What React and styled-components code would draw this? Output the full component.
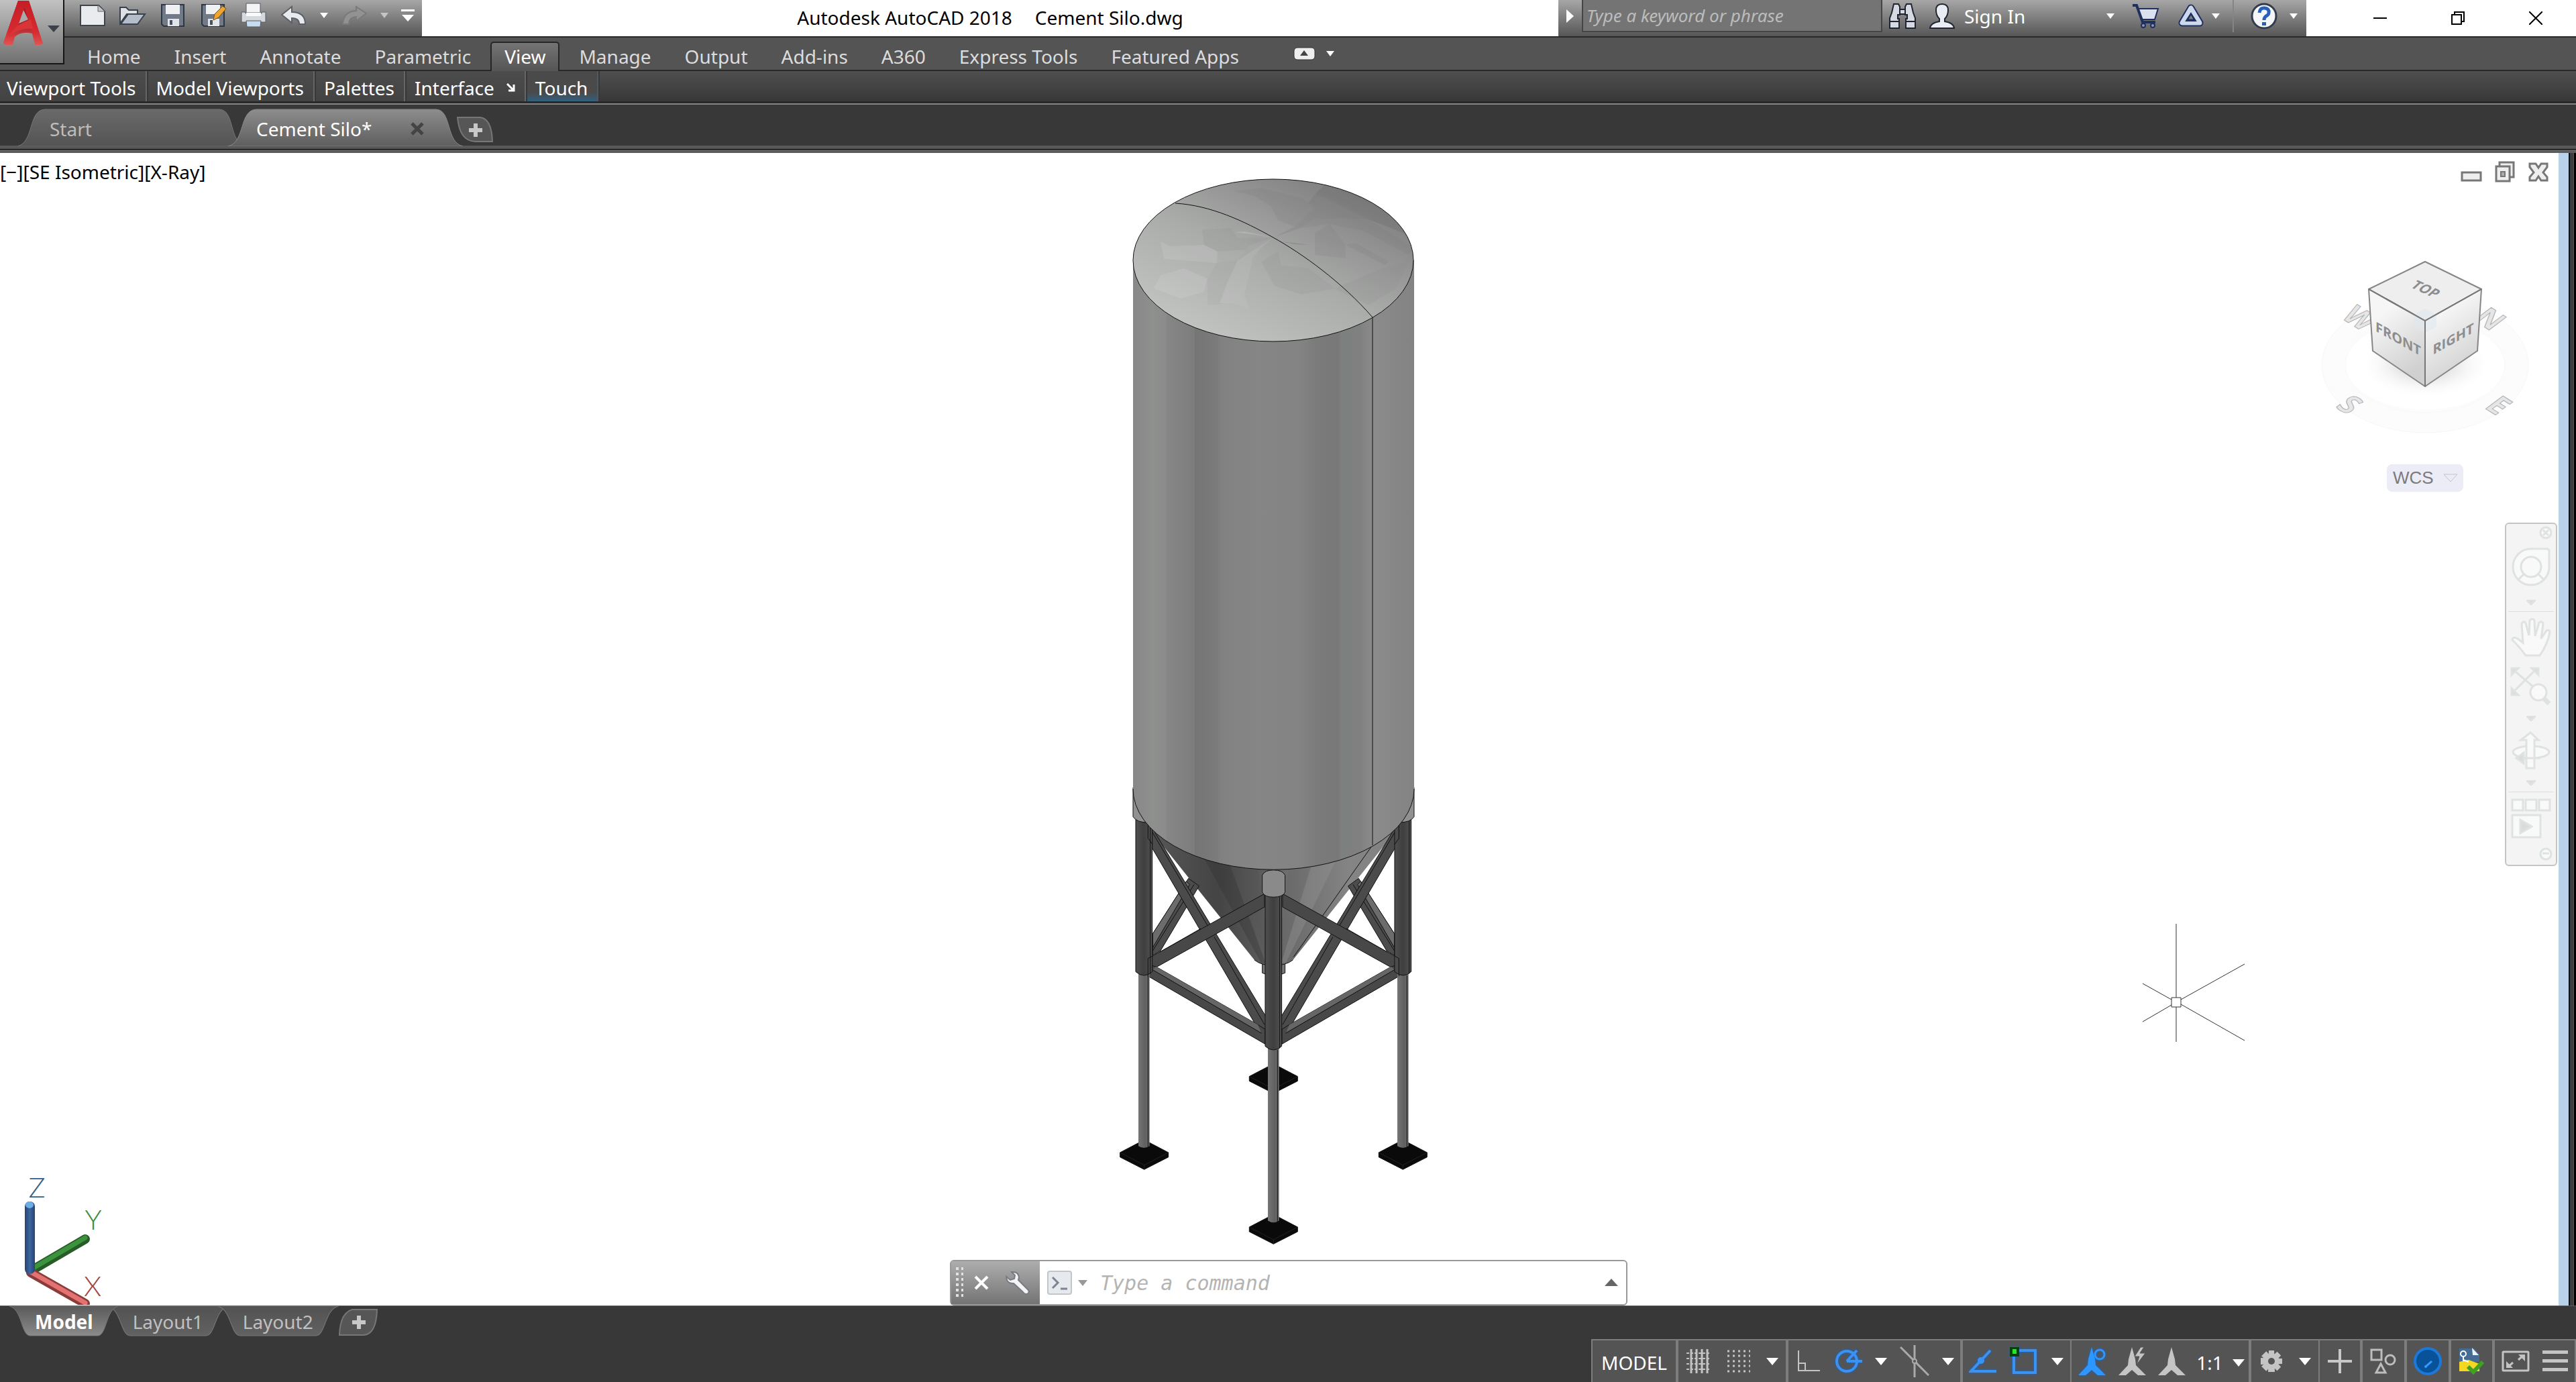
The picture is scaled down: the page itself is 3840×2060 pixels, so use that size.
import React, { useState } from "react";
import styled, { createGlobalStyle, css } from "styled-components";

const ribbonTabs = ["Home", "Insert", "Annotate", "Parametric", "View", "Manage", "Output", "Add-ins", "A360", "Express Tools", "Featured Apps"];

const App = () => {
  const [ribbon, setRibbon] = useState("View");
  const [layout, setLayout] = useState("Model");

  return (
    <>
      <GlobalStyle />
      <Window>
        <Header>
          <AppButton aria-label="Application menu">
            <svg width="94" height="94" viewBox="0 0 94 94">
              <defs>
                <linearGradient id="logoFoot" x1="0" y1="0" x2="0" y2="1">
                  <stop offset="0.5" stopColor="#a81a20" />
                  <stop offset="1" stopColor="#dd5a58" />
                </linearGradient>
                <linearGradient id="logoRed" x1="0" y1="0" x2="0" y2="1">
                  <stop offset="0" stopColor="#c41f25" />
                  <stop offset="0.7" stopColor="#d62a30" />
                  <stop offset="1" stopColor="#de5553" />
                </linearGradient>
              </defs>
              <path d="M27 1h16l21 64-4 2H52l-4-17Q32 46 22 55l-3 12H8l-3-3z" fill="url(#logoFoot)" />
              <path d="M27 1h8l1 11-8 24-8 20-3 11H8l-3-3z" fill="url(#logoRed)" />
              <path d="M33 1h10l21 64-4 2h-6L42 28z" fill="url(#logoRed)" />
              <path d="M46 29L49 43Q28 41 13 55 22 36 46 29z" fill="#d93539" />
              <path d="M35 15l7 14-14 6z" fill="#aaa" />
              <path d="M71 38h18l-9 10z" fill="#3b4149" />
            </svg>
          </AppButton>

          <TitleBar>
            <QuickAccess>
              <ToolButton $w={60} aria-label="New"><NewIcon /></ToolButton>
              <ToolButton $w={60} aria-label="Open"><OpenIcon /></ToolButton>
              <ToolButton $w={60} aria-label="Save"><SaveIcon /></ToolButton>
              <ToolButton $w={60} aria-label="Save As"><SaveIcon pencil /></ToolButton>
              <ToolButton $w={60} aria-label="Plot"><PrintIcon /></ToolButton>
              <ToolButton $w={60} aria-label="Undo"><UndoIcon /></ToolButton>
              <ToolButton $w={30} aria-label="Undo list"><Down /></ToolButton>
              <ToolButton $w={60} aria-label="Redo"><UndoIcon redo /></ToolButton>
              <ToolButton $w={30} aria-label="Redo list"><Down fill="#c4c4c4" /></ToolButton>
              <ToolButton $w={40} aria-label="Customize toolbar">
                <svg width="20" height="18"><path d="M0 0h20v3H0zM1 8h18l-9 10z" fill="#fff" /></svg>
              </ToolButton>
            </QuickAccess>
            <Title><span>Autodesk AutoCAD 2018</span><span>Cement Silo.dwg</span></Title>
            <InfoCenter>
              <ToolButton $w={35} aria-label="Expand search">
                <svg width="11" height="20"><path d="M0 0v20l11-10z" fill="#fff" /></svg>
              </ToolButton>
              <Search type="text" aria-label="Search" placeholder="Type a keyword or phrase" />
              <ToolButton $w={60} aria-label="Find"><BinocularsIcon /></ToolButton>
              <SignIn><PersonIcon /><span>Sign In</span><Down /></SignIn>
              <ToolButton $w={74} aria-label="App store"><CartIcon /></ToolButton>
              <ToolButton $w={80} $gap={9} aria-label="Stay connected"><ConnectIcon /><Down /></ToolButton>
              <Divider />
              <HelpButton aria-label="Help"><HelpIcon /><Down /></HelpButton>
            </InfoCenter>
            <WindowButtons>
              <button aria-label="Minimize"><svg width="20" height="20"><path d="M0 9h20v2H0z" /></svg></button>
              <button aria-label="Restore">
                <svg width="20" height="20" fill="none" stroke="#000" strokeWidth="2"><path d="M1 5h14v14H1zM5 5V1h14v14h-4" /></svg>
              </button>
              <button aria-label="Close">
                <svg width="20" height="20" stroke="#000" strokeWidth="2"><path d="M0 0l20 20M20 0L0 20" /></svg>
              </button>
            </WindowButtons>
          </TitleBar>

          <RibbonTabs>
            {ribbonTabs.map((tab) => (
              <RibbonTab key={tab} $on={tab === ribbon} onClick={() => setRibbon(tab)}>{tab}</RibbonTab>
            ))}
            <RibbonToggle aria-label="Minimize ribbon">
              <svg width="33" height="20"><rect x="1" y="1" width="31" height="18" rx="5" fill="#eee" stroke="#333" /><path d="M10 13h12l-6-8z" fill="#444" /></svg>
              <Down />
            </RibbonToggle>
          </RibbonTabs>
        </Header>

        <RibbonPanels>
          <Panel>Viewport Tools</Panel>
          <Panel>Model Viewports</Panel>
          <Panel>Palettes</Panel>
          <Panel>
            Interface
            <svg width="13" height="13" fill="none" stroke="#fff" strokeWidth="3"><path d="M1 1l10 10M11 2v9H3" /></svg>
          </Panel>
          <Panel $touch>Touch</Panel>
        </RibbonPanels>

        <FileTabs>
          <FileTab $w={340}>
            <FileTabShape />
            <span>Start</span>
          </FileTab>
          <FileTab $w={350} $on>
            <FileTabShape on />
            <span>Cement Silo*</span>
            <svg width="20" height="20" stroke="#444" strokeWidth="5"><path d="M2 2l16 16M18 2L2 18" /></svg>
          </FileTab>
          <AddTab aria-label="New drawing">
            <svg width="54" height="38" viewBox="0 0 54 38">
              <path d="M1 1h34q17 2 18 36H27Q4 36 1 1z" fill="#565656" stroke="#777" strokeWidth="2" />
              <path d="M25 10h6v7h7v6h-7v7h-6v-7h-7v-6h7z" fill="#c8c8c8" />
            </svg>
          </AddTab>
        </FileTabs>

        <Workspace>
          <Canvas>
            <ViewLabel><button>[−]</button><button>[SE Isometric]</button><button>[X-Ray]</button></ViewLabel>
            <Silo />
            <Crosshair />
            <ViewportButtons>
              <button aria-label="Minimize viewport">
                <svg width="32" height="34"><rect x="2" y="18" width="28" height="12" fill="#eee" stroke="#777" strokeWidth="3" /></svg>
              </button>
              <button aria-label="Restore viewport">
                <svg width="32" height="34" fill="#eee" stroke="#777" strokeWidth="3"><path d="M8 8V3h21v22h-5" /><path d="M3 9h20v22H3z" /><path d="M10 17h6v7h-6z" fill="#aaa" strokeWidth="2" /></svg>
              </button>
              <button aria-label="Close viewport">
                <svg width="32" height="34" viewBox="0 0 32 34"><path d="M3 5h9l4 6 4-6h9v5l-6 8 6 7v5h-9l-4-6-4 6H3v-5l6-7-6-8z" fill="#eee" stroke="#777" strokeWidth="3" /></svg>
              </button>
            </ViewportButtons>
            <ViewCube />
            <Wcs>WCS<svg width="22" height="13" fill="none" stroke="#c0c4cf"><path d="M1 1h20L11 12z" /></svg></Wcs>
            <NavBar />
            <UcsIcon />
            <CommandLine>
              <CommandTools>
                <svg width="12" height="46" fill="#e2e2e2">
                  {[0, 8, 16, 24, 32, 40].map((y) => <path key={y} d={`M0 ${y}h4v4H0zM8 ${y}h3v4H8z`} />)}
                </svg>
                <button aria-label="Close command line">
                  <svg width="22" height="22" stroke="#fff" strokeWidth="4"><path d="M2 2l18 18M20 2L2 20" /></svg>
                </button>
                <button aria-label="Customize">
                  <svg width="36" height="36" viewBox="0 0 36 36">
                    <path d="M9 2q10-1 11 8l-1 4 15 15q2 5-3 6-3 0-5-3L12 19Q2 20 1 9l6 5 6-2 1-5z" fill="#f4f4f6" stroke="#777b82" strokeWidth="2" />
                  </svg>
                </button>
              </CommandTools>
              <button aria-label="Recent commands">
                <svg width="60" height="36">
                  <rect x="1" y="1" width="35" height="34" rx="3" fill="#e6e9ee" stroke="#c2c6cb" strokeWidth="2" />
                  <path d="M8 10l8 8-8 8M20 27h10" fill="none" stroke="#7d848f" strokeWidth="3" />
                  <path d="M46 14h14l-7 9z" fill="#999" />
                </svg>
              </button>
              <CommandInput type="text" aria-label="Command" placeholder="Type a command" />
              <button aria-label="Command history"><svg width="20" height="12"><path d="M0 11h20L10 0z" fill="#666" /></svg></button>
            </CommandLine>
          </Canvas>
          <Edge />
        </Workspace>

        <LayoutTabs>
          {["Model", "Layout1", "Layout2"].map((name) => (
            <LayoutTab key={name} $on={name === layout} onClick={() => setLayout(name)}>
              <LayoutTabShape on={name === layout} />
              <span>{name}</span>
            </LayoutTab>
          ))}
          <AddTab $layout aria-label="New layout">
            <svg width="58" height="40" viewBox="0 0 58 40">
              <path d="M20 1h37q-1 37-20 38H1Q2 6 20 1z" fill="#565656" stroke="#777" strokeWidth="2" />
              <path d="M27 10h6v7h7v6h-7v7h-6v-7h-7v-6h7z" fill="#c8c8c8" />
            </svg>
          </AddTab>
        </LayoutTabs>

        <StatusBar>
          <Group><TextButton $w={124}>MODEL</TextButton></Group>
          <Group>
            <ToolButton $w={60} aria-label="Grid">
              <svg width="36" height="36" stroke="#c4c4c4" strokeWidth="3"><path d="M7 0v36M15 0v36M23 0v36M31 0v36" /><path d="M0 6h36M0 14h36M0 22h36M0 30h36" strokeDasharray="4 2" strokeWidth="2" /></svg>
            </ToolButton>
            <ToolButton $w={60} aria-label="Snap">
              <svg width="34" height="34" stroke="#c4c4c4" strokeWidth="3" strokeDasharray="3 5"><path d="M0 2h35M0 9h35M0 17h35M0 24h35M0 32h35" /></svg>
            </ToolButton>
            <ToolButton $w={40} aria-label="Snap settings"><BigDown /></ToolButton>
          </Group>
          <Group>
            <ToolButton $w={60} aria-label="Ortho">
              <svg width="34" height="32" fill="none" stroke="#c4c4c4" strokeWidth="2"><path d="M2 0v30h32M2 19h10v11" /></svg>
            </ToolButton>
            <ToolButton $w={60} aria-label="Polar tracking">
              <BlueSvg width="42" height="40"><circle cx="18" cy="20" r="15" /><path d="M18 20h23M18 20L33 4" /></BlueSvg>
            </ToolButton>
            <ToolButton $w={36} aria-label="Polar settings"><BigDown /></ToolButton>
            <ToolButton $w={64} aria-label="Isometric drafting">
              <svg width="44" height="48" stroke="#aaa" strokeWidth="3"><path d="M22 0v48M1 3l42 42" /><circle cx="22" cy="24" r="3" fill="#555" strokeWidth="2" /></svg>
            </ToolButton>
            <ToolButton $w={36} aria-label="Isoplane"><BigDown /></ToolButton>
          </Group>
          <Group $flat>
            <ToolButton $w={60} aria-label="Object snap tracking">
              <BlueSvg width="42" height="38"><path d="M32 3L3 34h38" /><circle cx="18" cy="18" r="3" fill="#3a92f2" /></BlueSvg>
            </ToolButton>
            <ToolButton $w={62} aria-label="Object snap">
              <BlueSvg width="42" height="42"><path d="M6 5h32v33H6z" /><path d="M2 1h10v11H2z" fill="#25e825" stroke="#06420a" /></BlueSvg>
            </ToolButton>
            <ToolButton $w={38} aria-label="Snap options"><BigDown /></ToolButton>
          </Group>
          <Group>
            <ToolButton $w={62} aria-label="Annotation visibility"><ScaleIcon kind="on" /></ToolButton>
            <ToolButton $w={58} aria-label="Auto scale"><ScaleIcon kind="auto" /></ToolButton>
            <ToolButton $w={60} aria-label="Annotation scale"><ScaleIcon /></ToolButton>
            <TextButton $w={84}>1:1<BigDown /></TextButton>
          </Group>
          <Group $flat>
            <ToolButton $w={60} aria-label="Workspace"><GearIcon /></ToolButton>
            <ToolButton $w={40} aria-label="Workspace list"><BigDown /></ToolButton>
          </Group>
          <Group>
            <ToolButton $w={60} aria-label="Annotation monitor"><svg width="36" height="36" stroke="#c8c8c8" strokeWidth="4"><path d="M18 0v36M0 18h36" /></svg></ToolButton>
          </Group>
          <Group>
            <ToolButton $w={62} aria-label="Isolate objects">
              <svg width="40" height="38" fill="none" stroke="#bdbdbd" strokeWidth="3"><path d="M2 2h15v15H2zM16 23l7 13H9z" /><circle cx="30" cy="17" r="7" /></svg>
            </ToolButton>
          </Group>
          <Group>
            <ToolButton $w={62} aria-label="Graphics performance">
              <svg width="46" height="46"><circle cx="23" cy="23" r="19" fill="#075299" stroke="#1c79dc" strokeWidth="4" /><path d="M20 31l9-8" stroke="#359cff" strokeWidth="3" /><circle cx="20" cy="31" r="2" fill="#359cff" /></svg>
            </ToolButton>
          </Group>
          <Group>
            <ToolButton $w={61} aria-label="Trusted file">
              <svg width="40" height="42">
                <path d="M1 2h22l8 9v11H1z" fill="#456d94" /><path d="M20 1l10 11h-9z" fill="#eef2f5" />
                <path d="M1 22l14-3 16 6v11H1z" fill="#f4d723" />
                <path d="M7 21V10M7 19l8 3" stroke="#fff" strokeWidth="2" /><circle cx="7" cy="10" r="4" fill="#456d94" stroke="#fff" strokeWidth="2" />
                <path d="M14 29l8 8 14-15" fill="none" stroke="#3fa122" strokeWidth="6" />
              </svg>
            </ToolButton>
          </Group>
          <Group>
            <ToolButton $w={61} aria-label="Clean screen">
              <svg width="42" height="32" fill="none" stroke="#c4c4c4" strokeWidth="3"><rect x="2" y="2" width="38" height="28" rx="1" /><path d="M25 14l8-7M17 18l-8 7" /><path d="M25 6h10v10zM7 16v10h10z" fill="#c4c4c4" stroke="none" /></svg>
            </ToolButton>
            <ToolButton $w={58} aria-label="Customization">
              <svg width="38" height="32" fill="#c4c4c4"><path d="M0 0h38v5H0zM0 13h38v5H0zM0 26h38v5H0z" /></svg>
            </ToolButton>
          </Group>
        </StatusBar>
      </Window>
    </>
  );
};

const Down = ({ fill = "#fff" }) => <svg width="12" height="8"><path d="M0 0h12L6 8z" fill={fill} /></svg>;
const BigDown = () => <svg width="18" height="11"><path d="M0 0h18L9 11z" fill="#fff" /></svg>;

const NewIcon = () => (
  <svg width="40" height="34"><path d="M2 2h27l9 9v21H2z" fill="#e9ebee" stroke="#3f444b" strokeWidth="2" /><path d="M28 2v9h10" fill="#c3c6ca" stroke="#666" /></svg>
);

const OpenIcon = () => (
  <svg width="42" height="30" stroke="#3a414b" strokeWidth="2">
    <path d="M2 27V3h9l4 4h13v6H12z" fill="#dde1e6" />
    <path d="M3 28L14 13h25L28 28z" fill="#b4bdc9" />
  </svg>
);

const SaveIcon = ({ pencil }) => (
  <svg width="40" height="36">
    <path d="M3 2h33v32H6l-3-3z" fill="#717a88" stroke="#30363f" strokeWidth="2" />
    <path d="M9 2h21v14H9z" fill="#eef0f2" />
    <path d="M12 23h17v11H12z" fill="#e2e5e9" />
    <path d="M15 25h4v7h-4z" fill="#4a525d" />
    {pencil && <path d="M20 25l2-9L34 4l5 4-11 13z" fill="#eea52e" stroke="#774c1b" />}
  </svg>
);

const PrintIcon = () => (
  <svg width="40" height="38" stroke="#555b63">
    <path d="M9 1h21v14H9z" fill="#f3f4f6" />
    <path d="M2 14h6v2h24v-2h6v15H2z" fill="#d5d8dd" />
    <path d="M9 20h22v-5H9z" fill="#fafafa" stroke="none" />
    <path d="M9 27h22l-1 9H10z" fill="#c7dcf0" />
  </svg>
);

const UndoIcon = ({ redo }) => (
  <svg width="38" height="30">
    <path
      d={redo ? "M37 12L22 2v6Q3 9 2 28h9q0-10 11-11v6z" : "M1 14L16 2v8q20 0 20 18h-9q0-9-11-9v7z"}
      fill={redo ? "#929292" : "#e8eaed"}
      stroke={redo ? "#7a7a7a" : "#5a6068"}
      strokeWidth="2"
    />
  </svg>
);

const BinocularsIcon = () => (
  <svg width="42" height="40" fill="#d5d9e2" stroke="#1f2430" strokeWidth="2">
    <path d="M8 2h7l2 4v12h-3v6h2v14H2V23l3-8zM34 2h-7l-2 4v12h3v6h-2v14h14V23l-3-8z" />
    <path d="M17 10h8v7h-8z" /><path d="M2 28h14M26 28h14" />
  </svg>
);

const PersonIcon = () => (
  <svg width="42" height="40" fill="#e9edf3" stroke="#1f2430" strokeWidth="2">
    <path d="M21 2q9 0 9 9 0 8-5 13v4q13 2 14 10H3q1-8 14-10v-4q-5-5-5-13 0-9 9-9z" />
  </svg>
);

const CartIcon = () => (
  <svg width="42" height="38" stroke="#20305e" strokeWidth="2">
    <path d="M9 8h30l-5 16H14z" fill="#dbe1ee" />
    <path d="M1 3h6l9 25h19" fill="none" strokeWidth="4" />
    <circle cx="17" cy="33" r="3" fill="#8997b8" /><circle cx="31" cy="33" r="3" fill="#8997b8" />
  </svg>
);

const ConnectIcon = () => (
  <svg width="44" height="38" fill="none">
    <path d="M22 7L9 29h26z" stroke="#20305e" strokeWidth="11" strokeLinejoin="round" />
    <path d="M22 7L9 29h26z" stroke="#cdd8ec" strokeWidth="7" strokeLinejoin="round" />
    <path d="M22 15l-7 11h14z" stroke="#20305e" strokeWidth="2" />
  </svg>
);

const HelpIcon = () => (
  <svg width="40" height="40">
    <circle cx="20" cy="20" r="18" fill="#f4f6fa" stroke="#333c4c" strokeWidth="3" />
    <path d="M13 15q1-8 8-7 7 1 6 7 0 3-4 5-3 2-3 6" fill="none" stroke="#2860b8" strokeWidth="5" />
    <path d="M17 29h6v5h-6z" fill="#2860b8" />
  </svg>
);

const ScaleIcon = ({ kind }) => (
  <ScaleSvg width="44" height="46" $on={kind === "on"}>
    <path d="M21 2l5 18 1 9 15 15H30l-9-8-9 8H1l14-15 1-9z" />
    {kind === "on" && <circle cx="33" cy="13" r="7" fill="none" strokeWidth="3" stroke="#2e97ff" />}
    {kind === "auto" && <path d="M34 2l-9 14h7l-4 12 13-17h-8l6-9z" stroke="#555" />}
  </ScaleSvg>
);

const GearIcon = () => (
  <svg width="32" height="32" fill="#c4c4c4">
    {[0, 45, 90, 135].map((a) => <path key={a} d="M12 0h8l1 32H11z" transform={`rotate(${a} 16 16)`} />)}
    <circle cx="16" cy="16" r="8" fill="none" stroke="#c4c4c4" strokeWidth="7" />
    <circle cx="16" cy="16" r="5" fill="#555" />
  </svg>
);

const FileTabShape = ({ on }) => (
  <svg viewBox="0 0 350 56" preserveAspectRatio="none">
    <defs>
      <linearGradient id={on ? "tabOn" : "tabOff"} x2="0" y2="1">
        <stop offset="0" stopColor={on ? "#8d8d8d" : "#6a6a6a"} />
        <stop offset="1" stopColor={on ? "#5e5e5e" : "#545454"} />
      </linearGradient>
    </defs>
    <path d="M0 56C26 50 16 2 42 1H310C334 2 324 50 350 56z" fill={on ? "url(#tabOn)" : "url(#tabOff)"} stroke={on ? "#888" : "#757575"} />
  </svg>
);

const LayoutTabShape = ({ on }) => (
  <svg viewBox="0 0 170 45" preserveAspectRatio="none">
    <defs>
      <linearGradient id={on ? "layOn" : "layOff"} x2="0" y2="1">
        <stop offset="0" stopColor={on ? "#5a5a5a" : "#525252"} />
        <stop offset="1" stopColor={on ? "#8b8b8b" : "#626262"} />
      </linearGradient>
    </defs>
    <path d="M0 0C20 4 18 43 32 44H138C152 43 150 4 170 0z" fill={on ? "url(#layOn)" : "url(#layOff)"} stroke="#777" />
  </svg>
);

// half of the support frame, the other half is mirrored
const Braces = () => (
  <>
    <path d="M235 505L395 325 442 350 270 560 235 575z" fill="#4c4c4c" />
    <path d="M235 505L385 335 400 345 235 550z" fill="#6c6c6c" />
    <path d="M235 560L420 345" />
    <path d="M215 150L240 170 740 772V830L715 825 215 205z" fill="#4b4b4b" />
    <path d="M225 165L480 478M510 515L735 800" fill="none" />
    <path d="M215 585L735 375V418L215 628z" fill="#484848" />
    <path d="M265 565L450 488" />
    <path d="M215 605L250 612 705 800 738 815V863L215 643z" fill="#484848" />
    <path d="M250 612L705 800 720 826 235 622z" fill="#666" stroke="none" />
    <path d="M235 622L722 828" />
  </>
);

const Plate = ({ x, y }) => (
  <g transform={`translate(${x} ${y})`}>
    <path d="M-108 -6L0 -47 108 -6V9L0 49-108 9z" fill="#0a0a0a" />
    <path d="M-108 -6L0 35 108 -6M0 35V49" fill="none" stroke="#222" />
  </g>
);

const Leg = ({ x, top, split, bottom }) => (
  <>
    <path d={`M${x - 25} ${split - 10}V${bottom - 6}Q${x} ${bottom + 6} ${x + 25} ${bottom - 6}V${split - 10}z`} fill="url(#pole)" stroke="none" />
    <path d={`M${x + 18} ${split}V${bottom}`} />
    <path d={`M${x - 37} ${top}V${split - 12}Q${x} ${split + 12} ${x + 37} ${split - 12}V${top}z`} fill="url(#sleeve)" />
    <path d={`M${x + 28} ${top}V${split - 5}`} />
  </>
);

const Silo = () => (
  <SiloSvg viewBox="0 0 520 1640">
    <defs>
      <linearGradient id="shell">
        {[
          [0, "#888"], [7, "#908f8f"], [7, "#8e908d"], [12, "#8b8b8b"], [12, "#868686"], [18, "#818181"], [22, "#7c7c7c"], [22, "#757575"],
          [30, "#7b7b7b"], [31, "#818181"], [45, "#868686"], [60, "#838383"], [65, "#7b7b7b"], [73, "#787878"], [74, "#7c807e"],
          [81, "#808080"], [82, "#848484"], [86, "#8b8b8b"], [100, "#838383"],
        ].map(([o, c], i) => <stop key={i} offset={o / 100} stopColor={c} />)}
      </linearGradient>
      <linearGradient id="dome" x1="0.15" y1="0.9" x2="0.8" y2="0.1">
        <stop offset="0" stopColor="#c2c4c2" />
        <stop offset="0.5" stopColor="#a9aba9" />
        <stop offset="1" stopColor="#808080" />
      </linearGradient>
      <linearGradient id="cone">
        <stop offset="0.05" stopColor="#555" />
        <stop offset="0.28" stopColor="#444" />
        <stop offset="0.42" stopColor="#565656" />
        <stop offset="0.52" stopColor="#676767" />
        <stop offset="0.62" stopColor="#707070" />
        <stop offset="0.8" stopColor="#858585" />
        <stop offset="1" stopColor="#808080" />
      </linearGradient>
      <linearGradient id="pole"><stop offset="0" stopColor="#757575" /><stop offset="0.6" stopColor="#606060" /><stop offset="1" stopColor="#6e6e6e" /></linearGradient>
      <linearGradient id="sleeve"><stop offset="0" stopColor="#4f4f4f" /><stop offset="0.5" stopColor="#3f3f3f" /><stop offset="1" stopColor="#525252" /></linearGradient>
      <clipPath id="domeClip"><ellipse cx="258" cy="148" rx="209" ry="121" /></clipPath>
    </defs>

    <g transform="translate(0 920) scale(.3333 .4592)">
      <Plate x={775} y={974} />
      <path d="M725 600V632Q775 650 827 632V600z" fill="#777" />
      <path d="M205 150L690 590Q720 608 775 608 830 608 862 590L1345 150z" fill="url(#cone)" stroke="none" />
      <g stroke="none" opacity="0.35">
        <path d="M420 200L540 200 740 600 720 600z" fill="#333" />
        <path d="M600 200L690 200 760 600 745 600z" fill="#555" />
        <path d="M780 200L860 200 790 600 780 600z" fill="#777" />
        <path d="M980 200L1100 200 830 600 810 600z" fill="#999" />
      </g>
      <path d="M1215 220L865 580M690 590Q720 608 775 608 830 608 862 590" fill="none" />
      <Braces />
      <g transform="translate(1551 0) scale(-1 1)"><Braces /></g>
      <Plate x={197} y={1221} />
      <Plate x={1354} y={1221} />
      <Plate x={775} y={1463} />
      <Leg x={196} top={130} split={640} bottom={1200} />
      <Leg x={1354} top={130} split={640} bottom={1200} />
      <Leg x={775} top={350} split={882} bottom={1442} />
      <path d="M214 150V195L235 215M214 643V585L235 577M1336 150V195L1317 215M1336 643V585L1317 577" fill="none" />
      <path d="M147 30V125Q165 145 215 143L260 150V60zM1404 30V125Q1386 145 1336 143L1300 150V60z" fill="#919191" />
      <path d="M725 315Q735 298 775 298 817 298 827 315V370Q817 386 775 386 735 386 725 370z" fill="#8a8a8a" />
    </g>

    <path d="M49 148V936A209 120 0 0 0 468 936V148z" fill="url(#shell)" stroke="none" />
    <path d="M49 936A209 120 0 0 0 468 936M406 233V1020" fill="none" />
    <ellipse cx="258" cy="148" rx="209" ry="121" fill="url(#dome)" />
    <g clipPath="url(#domeClip)" stroke="none" opacity="0.16">
      <path d="M258 114L290 98 305 70 320 50 380 70 400 87 360 86 320 86 298 100z" fill="#666" />
      <path d="M320 50L338 56 400 87 460 110 460 60 340 30z" fill="#555" />
      <path d="M298 100L320 86 400 87 468 130 460 140 390 103 342 94z" fill="#777" />
      <path d="M152 102L195 100 205 115 258 114 222 126 218 132 175 135 155 125z" fill="#888" />
      <path d="M90 120L105 127 155 125 175 135 174 152 95 146z" fill="#ddd" />
      <path d="M174 152L205 148 218 132 229 133 228 143 200 165 190 212 160 215 160 175z" fill="#999" />
      <path d="M258 114L240 130 228 143 215 200 222 220 200 212 178 212 190 180 205 148z" fill="#ccc" />
      <path d="M240 150L265 135 270 155 310 160 350 190 300 199 260 186z" fill="#888" />
      <path d="M320 108L342 94 366 125 425 155 430 150 380 122 365 125 366 145 320 140z" fill="#777" />
      <path d="M200 106L215 105 258 114 225 109z" fill="#fff" />
      <path d="M270 120L312 125 290 124z" fill="#333" />
      <path d="M200 45L240 40 300 55 320 70 290 98 265 88 255 68 230 52z" fill="#777" />
      <path d="M90 170L125 160 160 175 155 195 120 205 80 190z" fill="#ddd" />
      <path d="M420 160L460 150 440 190 400 215 350 190z" fill="#888" />
    </g>
    <path d="M112 63C165 66 215 90 258 114S360 180 406 233" fill="none" />
  </SiloSvg>
);

const Crosshair = () => (
  <CrossSvg viewBox="0 0 154 176" fill="none" stroke="#333">
    <path d="M51 0V110M51 124V176M1 89L44 113M58 120L153 174M1 146L44 121M58 113L153 60" />
    <path d="M44 110h14v14H44z" />
  </CrossSvg>
);

// letters lie flat on the compass plane, up points to north
const compass = [["W", 68, 95], ["N", 262, 96], ["S", 53, 224], ["E", 275, 225]];

const ViewCube = () => (
  <CubeSvg viewBox="0 0 330 270">
    <defs>
      <linearGradient id="face" x1="0" y1="0" x2="0.4" y2="1"><stop offset="0.3" stopColor="#f6f6f6" /><stop offset="1" stopColor="#d0d0d0" /></linearGradient>
      <radialGradient id="cubeShade"><stop offset="0" stopColor="#bbb" /><stop offset="1" stopColor="#fff" stopOpacity="0" /></radialGradient>
    </defs>
    <ellipse cx="165" cy="165" rx="136" ry="84" fill="none" stroke="#fcfcfc" strokeWidth="35" />
    <ellipse cx="165" cy="165" rx="154" ry="101" fill="none" stroke="#f7f7f7" />
    <ellipse cx="165" cy="165" rx="119" ry="71" fill="none" stroke="#f9f9f9" />
    <ellipse cx="165" cy="165" rx="100" ry="50" fill="url(#cubeShade)" />
    {compass.map(([letter, x, y]) => (
      <CompassText key={letter} y="15" transform={`translate(${x} ${y}) rotate(32) skewX(-21)`}>{letter}</CompassText>
    ))}
    <g stroke="#868686" strokeWidth="2" strokeLinejoin="round">
      <path d="M165 11L249 52 165 99 81 52z" fill="#eee" />
      <path d="M81 52L165 99V197L87 144z" fill="url(#face)" />
      <path d="M249 52L165 99V197L243 144z" fill="url(#face)" />
    </g>
    <path d="M148 90L165 81 182 90V108L165 117 148 108z" fill="#dfe7ee" opacity="0.6" />
    <path d="M81 52L165 99 249 52M165 99V197" fill="none" stroke="#777" strokeWidth="2" />
    <FaceText y="7" transform="translate(166 52) rotate(25) skewX(-22)">TOP</FaceText>
    <FaceText y="8" transform="translate(125 125) skewY(29)">FRONT</FaceText>
    <FaceText y="8" transform="translate(207 125) skewY(-29)">RIGHT</FaceText>
  </CubeSvg>
);

const NavArrow = () => <NavButton $h={26} aria-label="More options"><svg width="14" height="8"><path d="M0 0h14L7 7z" fill="#dadcdc" /></svg></NavButton>;

const NavBar = () => (
  <NavColumn>
    <NavButton $h={22} $end aria-label="Close navigation bar">
      <svg width="20" height="20"><circle cx="10" cy="10" r="8" /><path d="M6 6l8 8M14 6l-8 8" /></svg>
    </NavButton>
    <NavButton $h={80} aria-label="Steering wheel">
      <svg width="60" height="60"><path d="M30 3h24q3 1 3 4v23A27 27 0 1 1 30 3z" /><circle cx="30" cy="30" r="15" /><path d="M19 41l-9 9M41 41l9 9" /></svg>
    </NavButton>
    <NavArrow />
    <hr />
    <NavButton $h={78} aria-label="Pan">
      <svg width="60" height="60"><path d="M22 56Q11 41 2 33q1-6 8-2l8 6L16 9q3-6 6-1l5 18 1-22q4-5 7 0l1 23 6-20q5-3 6 2l-3 22 8-12q4-2 5 2-3 18-15 35z" /></svg>
    </NavButton>
    <NavButton $h={68} aria-label="Zoom extents">
      <svg width="62" height="60"><path d="M4 4l40 34M38 4L4 38" /><path d="M2 2h10L2 12zM42 2H32l10 10zM2 42V32l10 10z" fill="#dadcdc" /><circle cx="42" cy="38" r="12" /><path d="M50 47l8 8" strokeWidth="7" /></svg>
    </NavButton>
    <NavArrow />
    <NavButton $h={70} aria-label="Orbit">
      <svg width="60" height="58"><ellipse cx="30" cy="31" rx="27" ry="9" /><path d="M23 55V13h-8L29 2l12 11h-6v42z" /><path d="M8 40l11-8v16zM19 40h25" fill="#dadcdc" /></svg>
    </NavButton>
    <NavArrow />
    <hr />
    <NavButton $h={78} aria-label="Show motion">
      <svg width="60" height="60"><path d="M2 2h16v16H2zM22 2h16v16H22zM42 2h16v16H42zM2 25h42v33H2z" /><path d="M14 32v20l17-10z" fill="#dadcdc" /></svg>
    </NavButton>
    <NavButton $h={28} $end aria-label="Navigation bar options">
      <svg width="20" height="20"><circle cx="10" cy="10" r="8" /><path d="M5 9h10" /></svg>
    </NavButton>
  </NavColumn>
);

const UcsIcon = () => (
  <UcsSvg viewBox="0 0 160 200">
    <defs>
      <linearGradient id="zAxis"><stop offset="0" stopColor="#26436f" /><stop offset="0.5" stopColor="#3d659f" /><stop offset="1" stopColor="#26436f" /></linearGradient>
    </defs>
    <path d="M50 147L127 102" stroke="#265c26" strokeWidth="14" strokeLinecap="round" />
    <path d="M50 145L127 100" stroke="#3d923d" strokeWidth="7" strokeLinecap="round" />
    <path d="M46 152L127 198" stroke="#8c3b3b" strokeWidth="14" strokeLinecap="round" />
    <path d="M46 151L127 197" stroke="#e57272" strokeWidth="7" strokeLinecap="round" />
    <rect x="37" y="46" width="15" height="108" rx="7" fill="url(#zAxis)" />
    <ellipse cx="44" cy="51" rx="6" ry="5" fill="#6baee8" />
    <AxisText x="55" y="40" fill="#315f88">Z</AxisText>
    <AxisText x="139" y="88" fill="#3b8a3b">Y</AxisText>
    <AxisText x="138" y="187" fill="#a04444">X</AxisText>
  </UcsSvg>
);

const GlobalStyle = createGlobalStyle`
  * { box-sizing: border-box; }
  body { margin: 0; background: #383838; font: 28px/36px "Noto Sans", "Open Sans", sans-serif; }
  button { border: 0; padding: 0; background: none; color: inherit; font: inherit; cursor: pointer; }
  svg { display: block; flex: none; }
`;

const Window = styled.div`
  display: flex;
  flex-direction: column;
  min-height: 100vh;
  color: #fff;
`;

const silver = css`background: linear-gradient(#a6a6a6, #565656);`;

const Header = styled.header`
  display: grid;
  grid-template-columns: 96px 1fr;
  grid-template-rows: 54px 52px;
  background: #545454;
  border-bottom: 2px solid #292929;
  height: 106px;
`;

const AppButton = styled.button`
  grid-row: 1 / 3;
  height: 96px;
  background: linear-gradient(#c2c2c2, #707070);
  border-right: 2px solid #161616;
  border-bottom: 2px solid #161616;
`;

const TitleBar = styled.div`
  display: flex;
  background: #fff;
`;

const QuickAccess = styled.div`
  display: flex;
  padding: 0 1px 8px 12px;
  ${silver}
`;

const ToolButton = styled.button`
  width: ${(p) => p.$w}px;
  display: flex;
  flex: none;
  align-items: center;
  justify-content: center;
  gap: ${(p) => p.$gap || 0}px;
`;

const Title = styled.h1`
  flex: 1;
  display: flex;
  justify-content: center;
  gap: 34px;
  margin: 0;
  padding-top: 8px;
  color: #000;
  font: inherit;
  white-space: nowrap;
`;

const InfoCenter = styled.div`
  display: flex;
  padding-bottom: 6px;
  ${silver}
`;

const Search = styled.input`
  width: 448px;
  border: 2px solid #454545;
  border-top: 0;
  background: #747474;
  color: #fff;
  padding: 0 5px;
  font: italic 26px "Noto Sans", sans-serif;
  &::placeholder { color: #bcbcbc; opacity: 1; }
`;

const SignIn = styled.button`
  width: 296px;
  display: flex;
  align-items: center;
  padding: 0 10px 0 8px;
  gap: 12px;
  svg:last-child { margin-left: auto; }
`;

const Divider = styled.span`
  width: 2px;
  margin-left: 12px;
  background: #858585;
`;

const HelpButton = styled.button`
  display: flex;
  align-items: center;
  gap: 18px;
  padding: 0 13px 0 25px;
`;

const WindowButtons = styled.div`
  display: flex;
  padding-left: 52px;
  padding-right: 2px;
  button { width: 116px; display: grid; place-items: center; }
`;

const RibbonTabs = styled.nav`
  display: flex;
  border-top: 2px solid #292929;
  padding-left: 9px;
`;

const RibbonTab = styled.button`
  height: 44px;
  margin: 6px 4px 0;
  padding: 0 19px 2px;
  border: 2px solid transparent;
  border-bottom: 0;
  border-radius: 5px 5px 0 0;
  color: ${(p) => (p.$on ? "#fff" : "#dcdcdc")};
  ${(p) => p.$on && css`background: linear-gradient(#747474, #555); border-color: #262626;`}
`;

const RibbonToggle = styled.button`
  display: flex;
  align-items: center;
  gap: 16px;
  margin-left: 56px;
  padding-bottom: 3px;
`;

const RibbonPanels = styled.div`
  display: flex;
  height: 50px;
  background: linear-gradient(#4f4f4f, #363636);
  border-bottom: 2px solid #858585;
  box-shadow: inset 0 -3px #292929;
`;

const Panel = styled.button`
  display: flex;
  align-items: center;
  gap: 18px;
  height: 45px;
  padding: 4px 14px 0 12px;
  border-right: 2px solid #666;
  box-shadow: 2px 0 #383838;
  background: linear-gradient(#4c4c4c, #434343);
  margin-right: 2px;
  &:first-child { padding-left: 10px; }
  ${(p) => p.$touch && css`background: linear-gradient(#4a4a4a 70%, #31607f); border-color: #4d5a61;`}
`;

const FileTabs = styled.div`
  display: flex;
  align-items: flex-end;
  height: 72px;
  padding: 0 26px 5px;
  background: #383838;
  border-bottom: 5px solid #5c5c5c;
  box-shadow: inset 0 -1px #000, inset 0 -6px #585858;
`;

const FileTab = styled.button`
  position: relative;
  display: flex;
  align-items: center;
  width: ${(p) => p.$w}px;
  height: 56px;
  margin-right: -26px;
  padding: 4px 58px 0 48px;
  color: ${(p) => (p.$on ? "#fff" : "#bdbdbd")};
  ${(p) => p.$on && css`padding-left: 42px; margin-right: -16px;`}
  span { position: relative; }
  > svg:first-child { position: absolute; inset: 0; width: 100%; height: 100%; }
  > svg:last-child { position: relative; margin-left: auto; }
`;

const AddTab = styled.button`
  margin: ${(p) => (p.$layout ? "4px 0 0" : "0 0 6px 7px")};
`;

const Workspace = styled.main`
  flex: 1;
  display: flex;
`;

const Canvas = styled.section`
  position: relative;
  flex: 1;
  overflow: hidden;
  background: #fff;
  color: #000;
`;

const Edge = styled.div`
  width: 26px;
  background: linear-gradient(90deg, #b9d2e9 15px, #111 15px 17px, #3b3d3e 17px 22px, #5c5350 22px 23px, #000 23px);
`;

const ViewLabel = styled.div`
  padding-top: 10px;
  white-space: nowrap;
`;

const SiloSvg = styled.svg`
  position: absolute;
  top: 12px;
  left: calc(50% - 267px);
  width: 520px;
  height: 1640px;
  stroke: #111;
  * { vector-effect: non-scaling-stroke; }
`;

const CrossSvg = styled.svg`
  position: absolute;
  right: 467px;
  bottom: 393px;
  width: 154px;
  height: 176px;
`;

const ViewportButtons = styled.div`
  position: absolute;
  top: 11px;
  right: 14px;
  display: flex;
  gap: 18px;
`;

const CubeSvg = styled.svg`
  position: absolute;
  top: 151px;
  right: 34px;
  width: 330px;
  height: 270px;
`;

const CompassText = styled.text`
  font: bold 42px "Noto Sans", sans-serif;
  text-anchor: middle;
  fill: #e6e6e6;
  stroke: #b0b0b0;
`;

const FaceText = styled.text`
  font: bold 20px "Open Sans", "Noto Sans", sans-serif;
  text-anchor: middle;
  fill: #8c8d91;
`;

const Wcs = styled.button`
  position: absolute;
  top: 464px;
  right: 142px;
  width: 114px;
  height: 41px;
  display: flex;
  align-items: center;
  gap: 14px;
  padding-left: 9px;
  border-radius: 8px;
  background: #ebecf5;
  color: #7b7b7f;
  font: 26px "Liberation Sans", sans-serif;
`;

const NavColumn = styled.div`
  position: absolute;
  top: 551px;
  right: 2px;
  width: 78px;
  padding: 2px 0;
  display: flex;
  flex-direction: column;
  border: 2px solid #c4c4c4;
  border-radius: 6px;
  background: #f4f4f4;
  hr { width: 68px; margin: 0 auto; border: 0; border-top: 1px solid #ddd; }
  svg { fill: #f9f9f9; stroke: #dfe2e2; stroke-width: 3; }
`;

const NavButton = styled.button`
  height: ${(p) => p.$h}px;
  display: flex;
  align-items: center;
  justify-content: ${(p) => (p.$end ? "flex-end" : "center")};
  padding-right: ${(p) => (p.$end ? 5 : 0)}px;
`;

const UcsSvg = styled.svg`
  position: absolute;
  left: 0;
  bottom: 1px;
  width: 160px;
  height: 200px;
`;

const AxisText = styled.text`
  font: 300 42px Lato, sans-serif;
  text-anchor: middle;
`;

const CommandLine = styled.div`
  position: absolute;
  left: calc(50% - 491px);
  bottom: 0;
  width: 1010px;
  height: 68px;
  display: flex;
  align-items: center;
  gap: 11px;
  padding-right: 12px;
  border: 2px solid #999;
  border-radius: 6px;
  background: #fff;
`;

const CommandTools = styled.div`
  display: flex;
  align-items: center;
  gap: 15px;
  width: 132px;
  height: 100%;
  padding-left: 7px;
  background: linear-gradient(#adadad, #747474);
  button + button { margin-left: 10px; }
`;

const CommandInput = styled.input`
  flex: 1;
  min-width: 0;
  border: 0;
  outline: 0;
  padding: 0 8px;
  font: italic 30px "DejaVu Sans Mono", monospace;
  &::placeholder { color: #b4b4b4; opacity: 1; }
`;

const LayoutTabs = styled.div`
  display: flex;
  align-items: flex-start;
  height: 50px;
  padding-left: 14px;
  border-top: 1px solid #5c5c5c;
  background: #383838;
`;

const LayoutTab = styled.button`
  position: relative;
  height: 45px;
  padding: 0 38px;
  margin-right: -17px;
  color: ${(p) => (p.$on ? "#fff" : "#c0c0c0")};
  font-weight: ${(p) => (p.$on ? 700 : 400)};
  z-index: ${(p) => (p.$on ? 1 : 0)};
  span { position: relative; }
  > svg { position: absolute; inset: 0; width: 100%; height: 100%; }
  &:nth-child(3) { margin-right: 0; }
`;

const StatusBar = styled.footer`
  display: flex;
  justify-content: flex-end;
  height: 64px;
`;

const Group = styled.div`
  display: flex;
  background: #545454;
  border: 2px solid #7d7d7d;
  border-bottom: 0;
  border-right-width: ${(p) => (p.$flat ? 0 : 2)}px;
`;

const TextButton = styled.button`
  width: ${(p) => p.$w}px;
  display: flex;
  align-items: center;
  justify-content: center;
  gap: 14px;
  padding-top: 4px;
`;

const BlueSvg = styled.svg`
  fill: none;
  stroke: #3a92f2;
  stroke-width: 4;
  filter: drop-shadow(0 0 2px #1466cc);
`;

const ScaleSvg = styled.svg`
  fill: ${(p) => (p.$on ? "#2e97ff" : "#c4c4c4")};
  ${(p) => p.$on && css`filter: drop-shadow(0 0 2px #1466cc);`}
`;

export default App;
